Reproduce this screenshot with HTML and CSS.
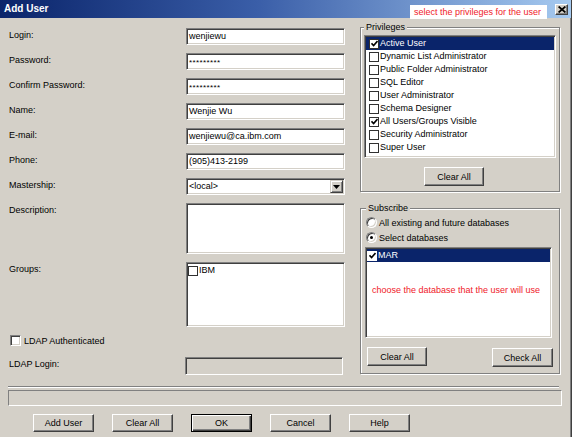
FILE: index.html
```html
<!DOCTYPE html>
<html>
<head>
<meta charset="utf-8">
<title>Add User</title>
<link rel="stylesheet" href="styles.css">
</head>
<body>
<div class="window">
  <div class="titlebar">
    <span class="title">Add User</span>
    <span class="note">select the privileges for the user</span>
    <span class="close"><svg width="8" height="7" viewBox="0 0 8 7"><path d="M0.6 0.5L7.4 6.5M7.4 0.5L0.6 6.5" stroke="#000" stroke-width="1.7"/></svg></span>
  </div>
  <div class="main">
    <div class="form">
      <span class="lbl">Login:</span><div class="field">wenjiewu</div>
      <span class="lbl">Password:</span><div class="field mask">*********</div>
      <span class="lbl">Confirm Password:</span><div class="field mask">*********</div>
      <span class="lbl">Name:</span><div class="field">Wenjie Wu</div>
      <span class="lbl">E-mail:</span><div class="field">wenjiewu@ca.ibm.com</div>
      <span class="lbl">Phone:</span><div class="field">(905)413-2199</div>
      <span class="lbl">Mastership:</span>
      <div class="field select"><span class="sel-text">&lt;local&gt;</span><span class="drop"><svg width="7" height="4" viewBox="0 0 7 4"><path d="M0 0H7L3.5 4Z" fill="#000"/></svg></span></div>
      <span class="lbl">Description:</span><div class="field area"></div>
      <span class="lbl">Groups:</span>
      <div class="field groups"><div class="item"><span class="cb"></span>IBM</div></div>
      <div class="ldap"><span class="cb3d"></span>LDAP Authenticated</div>
      <span class="lbl">LDAP Login:</span><div class="field disabled"></div>
    </div>
    <div class="side">
      <fieldset class="group priv">
        <legend>Privileges</legend>
        <div class="list plist">
          <div class="item sel"><span class="cb"><svg width="7" height="7" viewBox="0 0 7 7"><path d="M0.5 3.3L2.6 5.5L6.5 1" stroke="#000" stroke-width="1.6" fill="none"/></svg></span>Active User</div>
          <div class="item"><span class="cb"></span>Dynamic List Administrator</div>
          <div class="item"><span class="cb"></span>Public Folder Administrator</div>
          <div class="item"><span class="cb"></span>SQL Editor</div>
          <div class="item"><span class="cb"></span>User Administrator</div>
          <div class="item"><span class="cb"></span>Schema Designer</div>
          <div class="item"><span class="cb"><svg width="7" height="7" viewBox="0 0 7 7"><path d="M0.5 3.3L2.6 5.5L6.5 1" stroke="#000" stroke-width="1.6" fill="none"/></svg></span>All Users/Groups Visible</div>
          <div class="item"><span class="cb"></span>Security Administrator</div>
          <div class="item"><span class="cb"></span>Super User</div>
        </div>
        <button class="btn priv-clear">Clear All</button>
      </fieldset>
      <fieldset class="group sub">
        <legend>Subscribe</legend>
        <div class="radio-row first"><span class="radio"></span>All existing and future databases</div>
        <div class="radio-row"><span class="radio on"></span>Select databases</div>
        <div class="list slist">
          <div class="item sel"><span class="cb"><svg width="7" height="7" viewBox="0 0 7 7"><path d="M0.5 3.3L2.6 5.5L6.5 1" stroke="#000" stroke-width="1.6" fill="none"/></svg></span>MAR</div>
          <div class="hint">choose the database that the user will use</div>
        </div>
        <div class="sub-btns">
          <button class="btn w60">Clear All</button>
          <button class="btn w61 low">Check All</button>
        </div>
      </fieldset>
    </div>
  </div>
  <div class="sep"></div>
  <div class="status"></div>
  <div class="actions">
    <button class="btn act">Add User</button>
    <button class="btn act">Clear All</button>
    <button class="btn act default">OK</button>
    <button class="btn act">Cancel</button>
    <button class="btn act">Help</button>
  </div>
</div>
</body>
</html>
```

FILE: styles.css
```css
* { box-sizing: border-box; }

html, body {
  margin: 0;
  padding: 0;
  background: #d4d0c8;
}

body {
  font-family: "Liberation Sans", Arial, sans-serif;
  font-size: 9px;
  color: #000;
}

.window {
  width: 572px;
  height: 437px;
  background: #d4d0c8;
  border-right: 1px solid #404040;
  box-shadow: inset -1px 0 0 #808080;
  overflow: hidden;
}

/* title bar */
.titlebar {
  position: relative;
  height: 18px;
  display: flex;
  align-items: center;
  padding-left: 4px;
  padding-right: 2px;
  background: linear-gradient(to right, #0a246a 0%, #3a5ea8 45%, #a6caf0 100%);
}

.title {
  color: #fff;
  font-weight: bold;
  font-size: 10px;
  line-height: 12px;
}

.note {
  position: absolute;
  left: 410px;
  top: 5px;
  width: 137px;
  height: 14px;
  background: #fff;
  color: #f0202a;
  line-height: 14px;
  padding-left: 4px;
  white-space: nowrap;
}

.close {
  margin-left: auto;
  width: 13px;
  height: 11px;
  margin-right: 1px;
  display: flex;
  align-items: center;
  justify-content: center;
  background: #d4d0c8;
  border: 1px solid;
  border-color: #fff #404040 #404040 #fff;
  box-shadow: inset -1px -1px 0 #808080;
}

/* main */
.main {
  display: flex;
  align-items: flex-start;
}

.form {
  width: 360px;
  padding: 10px 0 0 9px;
  display: grid;
  grid-template-columns: 177px 159px;
  row-gap: 8px;
  align-items: start;
}

.lbl {
  line-height: 14px;
  white-space: nowrap;
}

.field {
  height: 17px;
  background: #fff;
  border: 1px solid;
  border-color: #808080 #fff #fff #808080;
  box-shadow: inset 1px 1px 0 #404040, inset -1px -1px 0 #d4d0c8;
  padding-left: 2px;
  line-height: 15px;
  white-space: nowrap;
}

.mask {
  font-size: 8px;
  letter-spacing: 0.4px;
  padding-top: 2px;
  line-height: 13px;
}

.select {
  display: flex;
  align-items: stretch;
  padding: 1px 1px 1px 2px;
}

.sel-text {
  flex: 1;
  line-height: 13px;
}

.drop {
  width: 13px;
  display: flex;
  align-items: center;
  justify-content: center;
  background: #d4d0c8;
  border: 1px solid;
  border-color: #d4d0c8 #404040 #404040 #d4d0c8;
  box-shadow: inset 1px 1px 0 #fff, inset -1px -1px 0 #808080;
}

.area {
  height: 51px;
}

.groups {
  height: 65px;
  padding: 1px;
}

.disabled {
  background: #d4d0c8;
  height: 18px;
  width: 158px;
  margin-left: -1px;
}

.item {
  height: 13px;
  line-height: 13px;
  display: flex;
  align-items: center;
  white-space: nowrap;
}

.cb {
  width: 10px;
  height: 10px;
  border: 1px solid #303030;
  background: #fff;
  margin-right: 1px;
  display: flex;
  align-items: center;
  justify-content: center;
  flex: none;
}

.groups .cb {
  margin-left: 0;
}

.ldap {
  grid-column: 1 / span 2;
  height: 14px;
  display: flex;
  align-items: flex-start;
  line-height: 12px;
}

.cb3d {
  width: 11px;
  height: 11px;
  margin-left: 1px;
  margin-right: 3px;
  background: #fff;
  border: 1px solid;
  border-color: #808080 #fff #fff #808080;
  box-shadow: inset 1px 1px 0 #404040, inset -1px -1px 0 #d4d0c8;
}

/* right side */
.side {
  width: 200px;
  margin-top: 3px;
  display: flex;
  flex-direction: column;
}

.group {
  margin: 0;
  min-width: 0;
  width: 200px;
  border: 1px solid #808080;
  box-shadow: inset 1px 1px 0 #fff, 1px 1px 0 #fff;
}

.group legend {
  padding: 0 2px;
  line-height: 12px;
  background: #d4d0c8;
}

.priv {
  padding: 2px 3px 5px 3px;
}

.priv legend {
  margin-left: 0;
}

.list {
  background: #fff;
  border: 1px solid;
  border-color: #808080 #fff #fff #808080;
  box-shadow: inset 1px 1px 0 #404040, inset -1px -1px 0 #d4d0c8;
  padding: 1px;
}

.plist {
  height: 123px;
}

.plist .cb {
  margin-left: 3px;
}

.item.sel {
  background: #0a246a;
  color: #fff;
}

.btn {
  font: inherit;
  color: #000;
  padding: 0;
  margin: 0;
  background: #d4d0c8;
  border: 1px solid;
  border-color: #fff #404040 #404040 #fff;
  box-shadow: inset -1px -1px 0 #808080;
  height: 19px;
  text-align: center;
}

.priv-clear {
  width: 60px;
  margin: 9px 0 0 60px;
}

.sub {
  margin-top: 10px;
  padding: 0 6px 6px 4px;
}

.sub legend {
  margin-left: 1px;
}

.radio-row {
  height: 15px;
  display: flex;
  align-items: center;
  white-space: nowrap;
}

.radio-row.first {
  margin-top: 1px;
}

.radio {
  width: 11px;
  height: 11px;
  margin-left: 1px;
  margin-right: 2px;
  border-radius: 50%;
  border: 1px solid;
  border-color: #808080 #fff #fff #808080;
  box-shadow: inset 1px 1px 0 #404040, inset -1px -1px 0 #d4d0c8;
  background: #fff;
  display: flex;
  align-items: center;
  justify-content: center;
  flex: none;
}

.radio.on::after {
  content: "";
  width: 3px;
  height: 3px;
  border-radius: 50%;
  background: #000;
}

.slist {
  width: 187px;
  height: 91px;
  margin-top: 2px;
}

.slist .cb {
  margin-left: 0;
  border-color: #fff;
}

.hint {
  color: #f0202a;
  margin-top: 23px;
  padding-left: 5px;
  line-height: 11px;
  white-space: nowrap;
}

.sub-btns {
  display: flex;
  justify-content: space-between;
  align-items: flex-start;
  margin-top: 9px;
  padding-left: 2px;
}

.w60 { width: 60px; }
.w61 { width: 61px; }
.low { margin-top: 1px; }

/* bottom */
.sep {
  margin: 11px 0 0 8px;
  width: 551px;
  height: 2px;
  border-top: 1px solid #808080;
  border-bottom: 1px solid #fff;
}

.status {
  margin: 2px 0 0 8px;
  width: 554px;
  height: 16px;
  border: 1px solid;
  border-color: #808080 #fff #fff #808080;
}

.actions {
  display: flex;
  gap: 18px;
  margin-top: 8px;
  padding-left: 33px;
}

.act {
  width: 61px;
  height: 18px;
}

.default {
  border: 1px solid #000;
  box-shadow: inset 1px 1px 0 #fff, inset -1px -1px 0 #404040, inset -2px -2px 0 #808080;
}
```
